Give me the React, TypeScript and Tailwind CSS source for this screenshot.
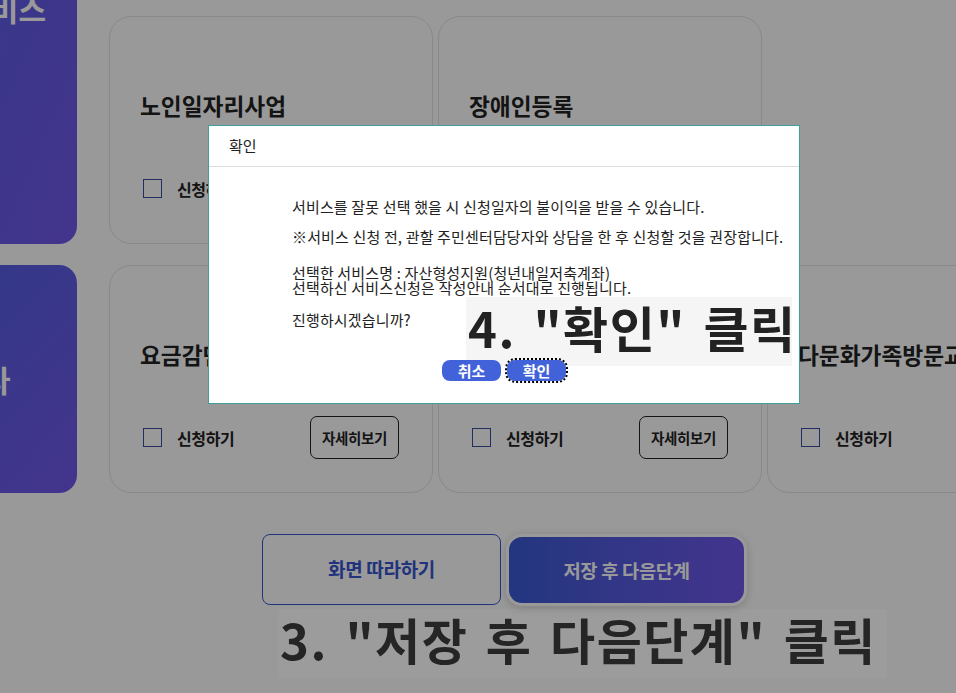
import React from 'react';

interface Service {
  title: string;
}

const rowOne: Service[] = [{ title: '노인일자리사업' }, { title: '장애인등록' }];
const rowTwo: Service[] = [
  { title: '요금감면' },
  { title: '자산형성지원' },
  { title: '다문화가족방문교육서비스' },
];

const ServiceCard: React.FC<{ service: Service }> = ({ service }) => (
  <div className="flex h-[228px] flex-col rounded-[22px] border border-[#e4e4e4] bg-white pl-[30px] pr-[33px] pb-[33px] pt-[74px]">
    <h3 className="whitespace-nowrap text-[22.7px] font-bold leading-[30px] text-[#222]">{service.title}</h3>
    <div className="mt-auto flex h-[43px] items-center">
      <span className="ml-[3px] h-[19px] w-[19px] shrink-0 border border-[#3a4ca0]" />
      <span className="ml-[15px] text-[16px] font-bold tracking-[-0.4px] text-[#222]">신청하기</span>
      <button className="ml-auto h-[43px] w-[89px] shrink-0 rounded-[7px] border border-[#222] text-[14.5px] font-bold tracking-[-0.3px] text-[#222]">
        자세히보기
      </button>
    </div>
  </div>
);

export default function App() {
  return (
    <div className="relative h-[693px] w-full overflow-hidden bg-white font-['Noto_Sans_CJK_KR','Noto_Sans',sans-serif]">
      {/* page underneath the dialog */}
      <div className="flex gap-[32px] pt-[16px]">
        <div className="-ml-[123px] flex w-[200px] shrink-0 flex-col gap-[21px]">
          <div className="-mt-[244px] flex h-[472px] items-center justify-center rounded-[18px] bg-gradient-to-br from-[#4a60e2] to-[#7158ea] text-[30px] font-bold text-white">
            복지서비스
          </div>
          <div className="flex h-[228px] items-center justify-center rounded-[18px] bg-gradient-to-br from-[#4a60e2] to-[#7158ea] pl-[12px] text-[30px] font-bold text-white">
            기타
          </div>
        </div>
        <div className="grid shrink-0 grid-cols-[324px_324px_324px] grid-rows-[228px_228px] gap-x-[5px] gap-y-[21px]">
          {rowOne.map((s) => (
            <ServiceCard key={s.title} service={s} />
          ))}
          <div />
          {rowTwo.map((s) => (
            <ServiceCard key={s.title} service={s} />
          ))}
        </div>
      </div>

      <div className="mt-[41px] flex items-start gap-[5px] pl-[262px]">
        <button className="h-[71px] w-[239px] rounded-[8px] border border-[#3a56d0] bg-white text-[19px] font-bold tracking-[-0.3px] text-[#3a56d0]">
          화면 따라하기
        </button>
        <button className="h-[72px] w-[241px] rounded-[16px] border-[3px] border-white bg-gradient-to-r from-[#3a5bd5] to-[#6f58ec] text-[18.7px] font-bold tracking-[-0.3px] text-white shadow-[0_2px_10px_rgba(0,0,0,0.18)]">
          저장 후 다음단계
        </button>
      </div>

      {/* dim layer */}
      <div className="absolute inset-0 bg-black/40" />

      <div className="absolute left-[278px] top-[609px] flex h-[69px] w-[609px] items-center whitespace-nowrap bg-white/[0.03] pb-[10px] pl-[2px] text-[49px] font-bold tracking-[1.5px] text-[#252525] [word-spacing:5px]">
        3. "저장 후 다음단계" 클릭
      </div>

      {/* confirm dialog */}
      <div className="absolute left-[208px] top-[125px] h-[279px] w-[592px] border border-[#3f9e9e] bg-white text-[#222]">
        <div className="flex h-[41px] items-center border-b border-[#dedede] pl-[20px] text-[15px]">확인</div>
        <div className="pl-[83px] pt-[32px] text-[15px] leading-[15px] tracking-[0.15px]">
          <p>서비스를 잘못 선택 했을 시 신청일자의 불이익을 받을 수 있습니다.</p>
          <p className="mt-[15px]">※서비스 신청 전, 관할 주민센터담당자와 상담을 한 후 신청할 것을 권장합니다.</p>
          <p className="mt-[21px]">
            선택한 서비스명 : 자산형성지원(청년내일저축계좌)
            <br />
            선택하신 서비스신청은 작성안내 순서대로 진행됩니다.
          </p>
          <p className="mt-[17px]">진행하시겠습니까?</p>
        </div>
        <div className="relative z-10 mt-[33px] flex justify-center gap-[6px]">
          <button className="h-[21px] w-[59px] rounded-[8px] bg-[#4162d8] text-[15px] font-bold leading-none text-white">
            취소
          </button>
          <button className="h-[21px] w-[59px] rounded-[8px] bg-[#4162d8] text-[15px] font-bold leading-none text-white outline-2 outline-dotted outline-black">
            확인
          </button>
        </div>
      </div>

      <div className="absolute left-[466px] top-[297px] flex h-[69px] w-[326px] items-center whitespace-nowrap bg-[#f5f5f5] pb-[10px] pl-[2px] text-[49px] font-bold tracking-[1.5px] text-[#222] [word-spacing:5px]">
        4. "확인" 클릭
      </div>
    </div>
  );
}
